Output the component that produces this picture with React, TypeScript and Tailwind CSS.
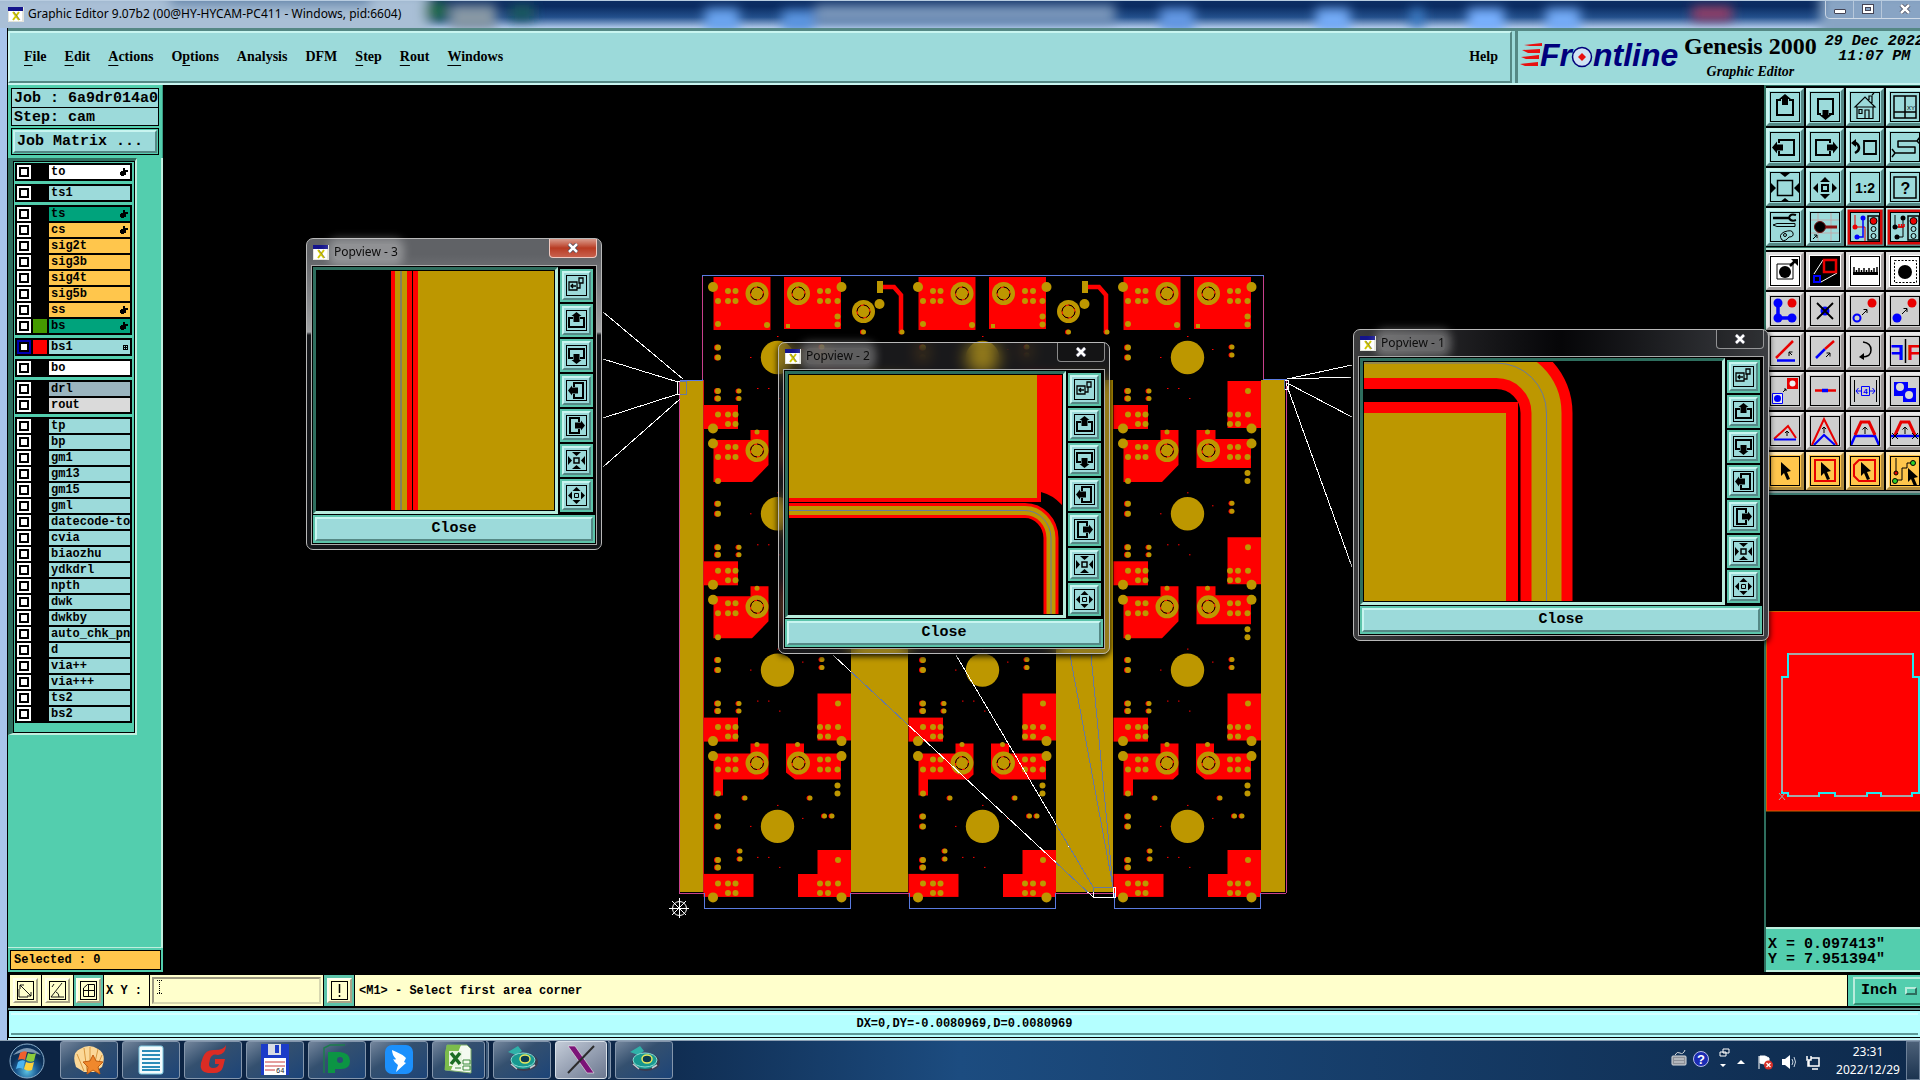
import type { ReactNode } from "react"

const bevel = "border-t-[#c8f5f0] border-l-[#c8f5f0] border-r-[#558885] border-b-[#558885]"
const mono = "font-['Liberation_Mono',monospace] font-bold"

/* ---------- layer list ---------- */

type Layer = { name: string; bg: string; hand?: boolean; swatch?: string; active?: boolean }

const sky = "bg-[#9cdada]"
const amber = "bg-[#ffc64c]"
const green = "bg-[#00a37c]"

const layerGroups: Layer[][] = [
    [{ name: "to", bg: "bg-white", hand: true }],
    [{ name: "ts1", bg: sky }],
    [
        { name: "ts", bg: green, hand: true },
        { name: "cs", bg: amber, hand: true },
        { name: "sig2t", bg: amber },
        { name: "sig3b", bg: amber },
        { name: "sig4t", bg: amber },
        { name: "sig5b", bg: amber },
        { name: "ss", bg: amber, hand: true },
        { name: "bs", bg: green, hand: true, swatch: "bg-[#459a00]" },
    ],
    [{ name: "bs1", bg: sky, swatch: "bg-[#ff0000]", active: true }],
    [{ name: "bo", bg: "bg-white" }],
    [
        { name: "drl", bg: "bg-[#9ab4be]" },
        { name: "rout", bg: "bg-[#dadada]" },
    ],
    [
        "tp", "bp", "gm1", "gm13", "gm15", "gml", "datecode-to", "cvia", "biaozhu", "ydkdrl",
        "npth", "dwk", "dwkby", "auto_chk_pnl", "d", "via++", "via+++", "ts2", "bs2",
    ].map((name) => ({ name, bg: sky })),
]

function LayerRow({ layer }: { layer: Layer }) {
    return (
        <label className="flex h-[14px] gap-[2px]">
            <span className={`flex w-[14px] items-center justify-center ${layer.active ? "bg-[#0000b0]" : "bg-white"}`}>
                <input
                    type="checkbox"
                    defaultChecked={layer.active}
                    className="size-[10px] appearance-none border-2 border-black bg-white"
                />
            </span>
            <span className={`w-[14px] ${layer.swatch ?? "bg-black"}`} />
            <span className={`flex min-w-0 flex-1 items-center overflow-hidden pl-[2px] text-xs leading-4 ${layer.bg}`}>
                <span className="min-w-0 flex-1 overflow-hidden whitespace-nowrap">{layer.name}</span>
                {layer.hand && (
                    <svg className="mr-[2px] h-[8px] w-[8px] shrink-0" viewBox="0 0 8 8">
                        <path d="M3 0h2v2h3v2H6v3H4v1H1V7H0V4h1V3h2z" fill="#000" />
                    </svg>
                )}
                {layer.active && (
                    <svg className="mr-[2px] size-[5px] shrink-0" viewBox="0 0 5 5" shapeRendering="crispEdges">
                        <path d="M.5.5h4v4h-4zM2.5 0v5M0 2.5h5" fill="none" stroke="#000" />
                    </svg>
                )}
            </span>
        </label>
    )
}

function Sidebar() {
    return (
        <aside className={`flex w-[155px] shrink-0 flex-col bg-[#53ceae] ${mono}`}>
            <div className="border-r border-[#3a9a82] p-[3px] text-[15px]">
                <div className="h-5 overflow-hidden border border-black bg-[#9cdada] pl-[2px] leading-[19px] whitespace-nowrap">Job : 6a9dr014a0</div>
                <div className="h-[18px] border border-t-0 border-black bg-[#9cdada] pl-[2px] leading-[19px]">Step: cam</div>
                <div className="mt-[2px] h-[27px] border border-black p-px">
                    <button className={`block h-full w-full border-2 bg-[#9cdada] pl-[2px] text-left leading-5 ${bevel}`}>
                        Job Matrix ...
                    </button>
                </div>
            </div>
            <div className="flex-1 border-r-2 border-b border-[#c0efdf]">
                <div className="w-[129px] border-t-[3px] border-r-2 border-b-2 border-l-[5px] border-t-[#2e6e5e] border-r-[#c0efdf] border-b-[#c0efdf] border-l-[#2e6e5e]">
                    <div className="flex flex-col gap-[3px] border border-black pt-px pr-[2px] pb-[9px] pl-px">
                        {layerGroups.map((group, i) => (
                            <div key={i} className="flex flex-col gap-[2px] bg-black p-[2px]">
                                {group.map((layer) => (
                                    <LayerRow key={layer.name} layer={layer} />
                                ))}
                            </div>
                        ))}
                    </div>
                </div>
            </div>
            <div className="p-[2px]">
                <div className="h-5 border border-black bg-[#ffc64c] pl-[3px] text-xs leading-[19px]">Selected : 0</div>
            </div>
        </aside>
    )
}

/* ---------- board drawing ---------- */

const GOLD = "#bd9700"
const RED = "#ff0000"

function Pads({ at, r = 3, loose = false }: { at: number[][]; r?: number; loose?: boolean }) {
    return (
        <>
            {at.map(([x, y], i) => (
                <g key={i}>
                    {loose && <circle cx={x - 1} cy={y} r={r} fill={RED} />}
                    <circle cx={x} cy={y} r={r} fill={GOLD} />
                </g>
            ))}
        </>
    )
}

function Ring({ x, y }: { x: number; y: number }) {
    return (
        <g>
            <circle cx={x} cy={y} r="11.5" fill={GOLD} />
            <circle cx={x} cy={y} r="6.5" fill="none" stroke={RED} strokeWidth="1" />
            <circle cx={x} cy={y} r="6.5" fill="none" stroke="#000" strokeWidth="1" strokeDasharray="7 3" />
        </g>
    )
}

function ModulePads() {
    return (
        <g>
            <Pads r={2.5} at={[[757, 432], [797.5, 432]]} />
            <Pads
                at={[
                    [728, 447], [735.5, 447], [718, 457], [728, 457], [735.5, 457],
                    [820, 447], [828, 447], [820, 457], [828, 457], [837.5, 457],
                    [718, 481], [837.5, 473], [837.5, 481],
                ]}
            />
            <Pads r={5} at={[[713, 443.5], [841.5, 443.5]]} />
            <Ring x={757} y={450.5} />
            <Ring x={798.5} y={450.5} />
        </g>
    )
}

function Module() {
    return (
        <g>
            <polygon points="713.5,440 750.5,440 750.5,430 768.5,430 768.5,465 752,482 713.5,482" fill={RED} />
            <polygon points="786.5,430 805.5,430 805.5,439 841,439 841,468 786.5,468" fill={RED} />
            <ModulePads />
        </g>
    )
}

function BottomModule() {
    return (
        <g>
            <polygon points="713.5,441 750.5,441 750.5,431 768.5,431 768.5,462 763,467 723,467 723,483 713.5,483" fill={RED} />
            <polygon points="786,431 804,431 804,441 841,441 841,467 795,467 786,460" fill={RED} />
            <ModulePads />
        </g>
    )
}

/* one repeated step between two module rows, drawn for the first row */
function Cell({ last = false, children }: { last?: boolean; children?: ReactNode }) {
    return (
        <g>
            <circle cx="777.5" cy="357.5" r="16.7" fill={GOLD} />
            <Pads loose at={[[718, 347.5], [718, 357.5], [718, 391], [718, 398.5]]} />
            {!last && <Pads loose r={2.5} at={[[739, 391], [739, 398.5], [822, 347], [822, 355]]} />}
            <path d="M750 357.500h1.500M757 388.500h1.500M802 349.500h1.500M777 336.500h1.500M768 388.500h1.500M779 398.500h1.500" stroke={RED} strokeWidth="1" />
            <rect x="703.5" y="405" width={last ? 50 : 34.5} height={last ? 23 : 24} fill={RED} />
            <path d={last ? "M817.5 381h33.5v47h-53v-23h19.500z" : "M817.5 381h33.5v47h-33.500z"} fill={RED} />
            <Pads
                at={[
                    [718, 414.5], [728, 414.5], [735.5, 414.5], [728, 424], [735.5, 424],
                    [838, 391], [820, 414.5], [828, 414.5], [838, 414.5], [820, 424], [828, 424],
                ]}
            />
            <Pads r={5} at={[[713, 428.5], [841.5, 428.5]]} />
            {last && <Pads loose r={2.5} at={[[745, 329], [810, 329], [824.5, 347], [832, 347], [740, 382], [740, 390]]} />}
            {children}
        </g>
    )
}

function BoardColumn({ x, links }: { x: number; links: boolean }) {
    return (
        <g transform={`translate(${x} 0)`}>
            <rect x="713.5" y="277" width="57" height="53" fill={RED} />
            <rect x="784" y="277" width="57" height="52" fill={RED} />
            <Ring x={757} y={293.5} />
            <Ring x={798.5} y={293.5} />
            <Pads r={5} at={[[713, 287], [841.5, 287]]} />
            <Pads
                at={[
                    [728, 291], [735.5, 291], [718, 301], [728, 301], [735.5, 301], [718, 324], [767, 325],
                    [820, 291], [828, 291], [820, 301], [828, 301], [837.5, 301], [837.5, 316.5], [837.5, 324.5],
                ]}
            />
            <rect x="786" y="324" width="4" height="4" fill={GOLD} />
            {links && (
                <g>
                    <path d="M883 287h11l7 8v37" fill="none" stroke={RED} strokeWidth="4.5" />
                    <rect x="877" y="281" width="6" height="12" fill={GOLD} />
                    <Ring x={863.5} y={311.5} />
                    <Pads r={5} at={[[879.5, 304]]} />
                    <Pads loose r={2.5} at={[[902, 332], [863.5, 332]]} />
                </g>
            )}
            <Cell><Module /></Cell>
            <g transform="translate(0 156.3)"><Cell><Module /></Cell></g>
            <g transform="translate(0 312.6)"><Cell><BottomModule /></Cell></g>
            <g transform="translate(0 468.9)"><Cell last /></g>
        </g>
    )
}

const callouts =
    "M603 312L683 379M603 359L678 382M603 418L678 394M603 467L680 399M677.5 381.5h9v12.500h-9z" +
    "M1287 379L1352 365M1287 379L1352 377M1287 383L1352 417M1286 383L1352 567M1284 380h4v9h-4z" +
    "M833 655L1093 897M956 655L1093 887M1070 655L1113 887M1091 655L1114 897M1093.5 887.5h21.500v9.500h-21.500z"

const rails = "M680 380h23v512h-23zM851 380h57v512h-57zM1056 380h57v512h-57zM1261 380h24v512h-24z"

function Board() {
    return (
        <svg className="block h-full w-full" viewBox="163 85 1601 887" preserveAspectRatio="xMinYMid slice">
            <defs>
                <clipPath id="rails">
                    <path d={rails} />
                </clipPath>
            </defs>
            <path d={rails} fill={GOLD} />
            <BoardColumn x={0} links />
            <BoardColumn x={205} links />
            <BoardColumn x={410} links={false} />
            <g fill="none" strokeWidth="1" shapeRendering="crispEdges">
                <path d="M702.5 379.5V275.5h561v104M679.5 380.5h23M1263.5 379.5h23M704.5 893v15.5h146V893M909.5 893v15.500h146V893M1114.5 893v15.5h146V893" stroke="#5b7be0" />
                <path d="M702.5 379V277M1263.5 379V277M679.5 893V381M1286.5 380v513M679 893.5h25M851 893.5h58M1056 893.5h58M1261 893.5h25" stroke="#c8408c" />
                <path d="M703.5 380v512" stroke="#d01818" />
                <path d={callouts} stroke="#fff" />
                <path d={callouts} stroke="#68799c" clipPath="url(#rails)" />
                <path d="M679.5 898v20M669 908.5h20" stroke="#fff" />
            </g>
            <g fill="none" stroke="#fff">
                <path d="M672 901l14 14M686 901l-14 14" />
                <circle cx="679.5" cy="908.5" r="7" />
            </g>
        </svg>
    )
}

/* ---------- pop view windows ---------- */

function XIcon() {
    return (
        <svg className="h-[15px] w-4 shrink-0" viewBox="0 0 16 15">
            <rect width="16" height="15" fill="#e4e4dc" />
            <rect width="15" height="4" fill="#14148c" />
            <rect x="1" y="4" width="13" height="10" fill="#fff" />
            <path d="M5 5l6 8M11 5l-6 8" stroke="#d2c800" strokeWidth="2" />
            <path d="M6 5l6 8" stroke="#555" strokeWidth=".6" />
        </svg>
    )
}

const popIcons: { label: string; art: ReactNode }[] = [
    { label: "Link view", art: <path d="M3 7h8v8H3zM13 3h4v5h-4zM11 13h3V8M5 11h5M7 9l-2 2 2 2" fill="none" stroke="#000" strokeWidth="1.3" /> },
    { label: "Pan up", art: <><path d="M7 8H3v9h15V8h-4" fill="none" stroke="#000" strokeWidth="2" /><path d="M10.5 2l5 4h-2v6h-6V6h-2z" /></> },
    { label: "Pan down", art: <><path d="M7 13H3V4h15v9h-4" fill="none" stroke="#000" strokeWidth="2" /><path d="M10.5 19l5-4h-2V9h-6v6h-2z" /></> },
    { label: "Pan left", art: <><path d="M8 7V3h9v15H8v-4" fill="none" stroke="#000" strokeWidth="2" /><path d="M2 10.5l4-5v2h6v6H6v2z" /></> },
    { label: "Pan right", art: <><path d="M13 7V3H4v15h9v-4" fill="none" stroke="#000" strokeWidth="2" /><path d="M19 10.5l-4-5v2H9v6h6v2z" /></> },
    { label: "Zoom in", art: <><path d="M8 8h5v5H8z" fill="none" stroke="#000" strokeWidth="1.5" /><path d="M6 2h9l-4.500 4zM6 19h9l-4.500-4zM2 6v9l4-4.500zM19 6v9l-4-4.500z" /></> },
    { label: "Zoom out", art: <><path d="M8.5 8.5h4v4h-4z" fill="none" stroke="#000" strokeWidth="1" /><path d="M6.5 6h8l-4-4zM6.5 15h8l-4 4zM6 6.5v8l-4-4zM15 6.5v8l4-4z" /></> },
]

function Popview({ title, place, frame, red, children }: { title: string; place: string; frame: string; red?: boolean; children: ReactNode }) {
    return (
        <section className={`absolute flex flex-col rounded-[7px] border border-[#b8b8b8] px-1 pb-1 shadow-[0_2px_6px_#000] backdrop-blur-sm ${place} ${frame}`}>
            <header className="flex h-[26px] items-start justify-between pl-[2px] font-['Noto_Sans',sans-serif]">
                <div className="flex items-center gap-[5px] pt-[5px]">
                    <XIcon />
                    <h2 className="rounded bg-white/30 text-xs leading-4 text-[#0c0c0c] shadow-[0_0_8px_6px_rgba(255,255,255,0.3)]">{title}</h2>
                </div>
                <button
                    aria-label={`Close ${title}`}
                    className={`flex h-[19px] w-12 items-center justify-center rounded-b-[4px] border border-t-0 pb-px ${
                        red ? "border-[#f0c8c0] bg-linear-to-b from-[#d99a8c] via-[#b83a22] to-[#c8604c]" : "border-white/50 bg-black/20"
                    }`}
                >
                    <svg className="h-[10px] w-[12px]" viewBox="0 0 12 10">
                        <path d="M2 1l8 8M10 1L2 9" stroke="#445" strokeWidth="4" />
                        <path d="M2 1l8 8M10 1L2 9" stroke="#fff" strokeWidth="2.5" />
                    </svg>
                </button>
            </header>
            <div className="flex flex-1 flex-col border border-[#aaa] bg-black p-px">
                <div className="flex flex-1 gap-[2px]">
                    <div className="min-w-0 flex-1 border-[3px] border-t-[#2e6e5e] border-r-[#b8ecdc] border-b-[#b8ecdc] border-l-[#2e6e5e] bg-black p-px">{children}</div>
                    <div className="flex flex-col gap-[2px] pt-[2px] pr-[2px]">
                        {popIcons.map((icon) => (
                            <button key={icon.label} aria-label={icon.label} className="size-[33px] border-2 border-[#5cc4aa]">
                                <span className={`block size-[29px] border-2 bg-[#9cdada] p-[2px] ${bevel}`}>
                                    <svg className="size-[21px]" viewBox="0 0 21 21">
                                        <rect x=".5" y=".5" width="20" height="20" fill="none" stroke="#000" />
                                        {icon.art}
                                    </svg>
                                </span>
                            </button>
                        ))}
                    </div>
                </div>
                <div className="mt-px border-2 border-[#5cc4aa]">
                    <button className={`block h-6 w-full border-2 bg-[#9cdada] text-[15px] leading-5 ${mono} ${bevel}`}>Close</button>
                </div>
            </div>
        </section>
    )
}

function Popviews() {
    return (
        <>
            <Popview
                title="Popview - 3"
                red
                place="top-[153px] left-[298px] h-[312px] w-[296px]"
                frame="bg-linear-to-b from-[#606266] from-5% via-[#a0a2a4] via-30% to-[#14161a] to-31%"
            >
                <svg className="block h-full w-full" viewBox="0 0 238 239" preserveAspectRatio="xMinYMin slice">
                    <rect x="74" width="4" height="239" fill={RED} />
                    <rect x="78" width="12" height="239" fill={GOLD} />
                    <rect x="83" width="2" height="239" fill="#84805c" />
                    <rect x="90" width="11" height="239" fill={RED} />
                    <rect x="95" width="1" height="239" fill="#000" />
                    <rect x="101" width="137" height="239" fill={GOLD} />
                </svg>
            </Popview>
            <Popview title="Popview - 2" place="top-[257px] left-[770px] h-[312px] w-[332px]" frame="bg-[#48484c]/35">
                <svg className="block h-full w-full" viewBox="0 0 273 239" preserveAspectRatio="xMinYMin slice">
                    <path d="M0 123h252v-6q12 3 21 13V0h-25v123z" fill={RED} />
                    <path d="M0 123h252v4H0z" fill={RED} />
                    <rect width="248" height="123" fill={GOLD} />
                    <g fill="none">
                        <path d="M-9 135.500H236A26 28 0 0 1 262 163V250" stroke={RED} strokeWidth="15" />
                        <path d="M-9 135.500H236A26 28 0 0 1 262 163V250" stroke={GOLD} strokeWidth="9" />
                        <path d="M-9 135.500H236A26 28 0 0 1 262 163V250" stroke="#68799c" strokeWidth="1" />
                    </g>
                </svg>
            </Popview>
            <Popview
                title="Popview - 1"
                place="top-[244px] right-[151px] h-[312px] w-[416px]"
                frame="bg-linear-to-r from-[#3c3c3e] via-[#060608] via-50% to-[#3c3e42]"
            >
                <svg className="block h-full w-full" viewBox="0 0 358 239" preserveAspectRatio="xMinYMin slice">
                    <g fill="none">
                        <path d="M-30 1H132A50 50 0 0 1 182.5 51V270" stroke={RED} strokeWidth="52" />
                        <path d="M-30 1H132A50 50 0 0 1 182.5 51V270" stroke={GOLD} strokeWidth="30" />
                        <path d="M-30 1H132A50 50 0 0 1 182.5 51V270" stroke="#68799c" strokeWidth="1" />
                    </g>
                    <path d="M0 40h154v199H0z" fill={RED} />
                    <path d="M0 51h142v188H0z" fill={GOLD} />
                    <path d="M154 47h2v192h-2z" />
                </svg>
            </Popview>
        </>
    )
}

/* ---------- tool palette ---------- */

const line = { fill: "none", stroke: "#000" }
const BLUE = "#0000ff"
const CRIMSON = "#e80000"

function Traffic({ red }: { red: boolean }) {
    return (
        <>
            <rect x="-1" y="-1" width="32" height="32" fill="none" stroke="#d80808" strokeWidth="3" />
            <rect x="18" y="4" width="11" height="24" {...line} strokeWidth="1.5" />
            <circle cx="23.5" cy="9" r="3.5" fill="#e80000" stroke="#000" />
            <circle cx="23.5" cy="17" r="2.5" {...line} />
            <circle cx="23.5" cy="24" r="2.5" {...line} />
            {red ? (
                <>
                    <path d="M5 3v12h10v14" fill="none" stroke={CRIMSON} />
                    <path d="M13 7v18H8" fill="none" stroke={BLUE} strokeWidth="1.5" />
                    <circle cx="13" cy="6" r="2.5" fill={BLUE} />
                    <circle cx="7" cy="25" r="2.5" fill={BLUE} />
                    <circle cx="5" cy="15" r="2.5" fill={CRIMSON} />
                </>
            ) : (
                <>
                    <path d="M5 3v12h8M13 7v18H8" {...line} />
                    <path d="M8 15h6M9 12v3M11.5 12v3M14 12v3" stroke={CRIMSON} strokeWidth="1.5" />
                    <circle cx="13" cy="6" r="2.5" />
                    <circle cx="7" cy="25" r="2.5" />
                    <circle cx="5" cy="15" r="2.5" />
                </>
            )}
        </>
    )
}

const viewTools: [string, ReactNode][] = [
    ["Pan up", <><path d="M11 8H7v15h16V8h-4" {...line} strokeWidth="2" /><path d="M15 2l6 5h-3v6h-6V7H9z" /></>],
    ["Pan down", <><path d="M11 22H8V7h15v15h-4" {...line} strokeWidth="2" /><path d="M15.5 28l6-5h-3v-5h-6v5h-3z" /></>],
    ["Home", <path d="M7 14.5v12h16v-12M5 15l10-10 10 10zM19 8V4h3v7M22 3l2-2M9 17.5h3v4H9zM15 26v-8h4v8" {...line} strokeWidth="1.2" />],
    ["Window XY", <><path d="M4 4h22v22H4zM15 4v22M4 20h22" {...line} strokeWidth="1.5" /><text x="17" y="18" fontSize="6" fontFamily="Liberation Sans">XY</text></>],
    ["Pan left", <><path d="M9 11V8h15v15H9v-4" {...line} strokeWidth="2" /><path d="M2 15.5l5-6v3h6v6H7v3z" /></>],
    ["Pan right", <><path d="M20 11V8H6v15h14v-4" {...line} strokeWidth="2" /><path d="M28 15.5l-5-6v3h-6v6h6v3z" /></>],
    ["Previous view", <><path d="M14 9h12v13H14z" {...line} strokeWidth="1.8" /><path d="M3 11h3q3 2 3 5t-4 5" {...line} strokeWidth="2.5" /><path d="M1 11l5-4v8z" /></>],
    ["Serpentine", <path d="M27 9H8v6h17v6H5M30 5l-3 4 3 3M2 17l3 4-3 4" {...line} strokeWidth="1.5" strokeLinejoin="round" />],
    ["Zoom in", <><path d="M7.5 8.5h15v15h-15z" {...line} strokeWidth="1.5" /><path d="M10 1h10l-5 4zM10 30h10l-5-4zM1 11v10l5-5zM29 11v10l-5-5z" /></>],
    ["Zoom out", <><path d="M12 13h6v6h-6z" {...line} strokeWidth="2" /><path d="M10 10h10l-5-5zM10 22h10l-5 5zM8 11v10l-5-5zM22 11v10l5-5z" /></>],
    ["Scale", <text x="15" y="21" textAnchor="middle" fontSize="14" fontFamily="Liberation Sans" fontWeight="bold">1:2</text>],
    ["Help", <><path d="M4 5h22v21H4z" {...line} strokeWidth="1.5" /><text x="15.5" y="22" textAnchor="middle" fontSize="16" fontFamily="Liberation Sans" fontWeight="bold">?</text></>],
    ["Settings", <><path d="M3 6h16" {...line} strokeWidth="2.5" /><path d="M26 3q-6-2-7 3 2 4 7 2" {...line} strokeWidth="2" /><path d="M3 13l4-1.500h18v3H7zM12 28q-4-5 2-8 8-3 9 1 1 4-4 4-4 5-7 3z" {...line} /><circle cx="15" cy="23" r="1.5" {...line} /></>],
    ["Highlight", <><path d="M0 8h30M0 21h30M8 0v30M21 0v30" stroke="#c99" strokeWidth=".7" /><path d="M12 15h15" stroke="#8a1212" strokeWidth="3" /><circle cx="10" cy="15" r="5.5" stroke="#701010" /><path d="M3 27l4-4M4 23h3v3" {...line} /></>],
    ["Net points", <Traffic red />],
    ["Net compare", <Traffic red={false} />],
]

const gray = "bg-[#cecece] border-t-[#e8e8e8] border-l-[#e8e8e8] border-r-[#9c9898] border-b-[#9c9898]"
const white = "bg-white border-t-[#e0e0e0] border-l-[#e0e0e0] border-r-[#a8a4a4] border-b-[#a8a4a4]"
const orange = "bg-[#ffc64c] border-t-[#ffe7b0] border-l-[#ffe7b0] border-r-[#b08a3c] border-b-[#b08a3c]"

const pointer = <path d="M11 6l10 9-4 1 3 7-3 1-3-7-3 3z" />

const editTools: [string, string, ReactNode][] = [
    ["Move feature", white, <><path d="M7 8h16v15H7z" {...line} /><circle cx="15" cy="16" r="6" /><path d="M20 10l5-5" stroke="#000" strokeWidth="2.5" /><path d="M21 3h7v7z" /></>],
    ["Pop view", white, <><path d="M0 0h30v30H0z" /><path d="M4 18L13 4M11 26l16-9" stroke="#fff" /><path d="M14 4h12v12H14z" fill="none" stroke={CRIMSON} strokeWidth="2.5" /><path d="M4 20h6v6H4z" fill="none" stroke={BLUE} strokeWidth="2" /></>],
    ["Measure", white, <><path d="M3 16h25v3H3z" /><path d="M4 11v6M6.5 14v3M9 12v5M11.5 14v3M14 12v5M16.5 14v3M19 12v5M21.5 14v3M24 12v5M27 11v6" {...line} strokeWidth="1.5" /></>],
    ["Select by area", white, <><path d="M4.5 4.5h22v22h-22z" {...line} strokeDasharray="2 1.5" /><circle cx="15" cy="16" r="7" /></>],
    ["Select net", gray, <><path d="M8 7v15h14" fill="none" stroke={BLUE} strokeWidth="3.5" /><g fill={BLUE}><circle cx="8" cy="7" r="4.5" /><circle cx="8" cy="22" r="4.5" /><circle cx="22" cy="22" r="4.5" /></g><circle cx="22" cy="7" r="4.5" fill={CRIMSON} /></>],
    ["Delete", gray, <><circle cx="15" cy="15" r="4.5" fill={BLUE} /><path d="M7 7l16 16M23 7L7 23" {...line} strokeWidth="1.8" /></>],
    ["Copy", gray, <><circle cx="22" cy="7" r="4.5" fill={CRIMSON} /><circle cx="7" cy="22" r="3.5" fill="none" stroke={BLUE} strokeWidth="2" /><path d="M12 19l5-5M13.5 13.5H17V17" {...line} /></>],
    ["Move", gray, <><circle cx="22" cy="7" r="4.5" fill={CRIMSON} /><circle cx="7" cy="22" r="4.5" fill={BLUE} /><path d="M12 18l5-5M13.5 12.5H17V16" {...line} /></>],
    ["Rotate line", gray, <><path d="M6 22L23 5" stroke={CRIMSON} strokeWidth="2.5" /><path d="M7 24.5h18" stroke={BLUE} strokeWidth="2.5" /><path d="M22 19l-3-3M19 20v-4h3.500" {...line} /></>],
    ["Stretch line", gray, <><path d="M6 22l9-9" stroke={BLUE} strokeWidth="2.5" /><path d="M15 13l9-8" stroke={CRIMSON} strokeWidth="2.5" /><path d="M16 21l4-4M16.5 17H20v3.500" {...line} /></>],
    ["Rotate", gray, <><path d="M13 6q8 1 8 8t-9 7" {...line} strokeWidth="1.5" /><path d="M9 21l5-4v7z" /></>],
    ["Mirror", gray, <><path d="M15.5 3v24" {...line} strokeWidth="1.5" /><text x="17" y="24" fontSize="22" fontFamily="Liberation Sans" fontWeight="bold" fill={CRIMSON}>F</text><g transform="scale(-1 1)"><text x="-14" y="24" fontSize="22" fontFamily="Liberation Sans" fontWeight="bold" fill={BLUE}>F</text></g></>],
    ["Substitute", gray, <><path d="M17 2h11v11H17z" fill={CRIMSON} /><circle cx="22.5" cy="7.5" r="3" fill="#eee" /><path d="M2.5 17.5h10v10h-10z" fill="#eee" stroke={BLUE} /><circle cx="7.5" cy="22.5" r="3.5" fill={BLUE} /><path d="M13 16l3-3M14 13h2v2" {...line} /></>],
    ["Join", gray, <><path d="M5 14.5h21" stroke={CRIMSON} strokeWidth="2.5" /><path d="M12 14.5h6" stroke={BLUE} strokeWidth="3.5" /></>],
    ["Spacing", gray, <><path d="M4.5 4v22M26.5 4v22" {...line} /><path d="M6 15h19M8.5 12L6 15l2.500 3M22.5 12l2.500 3-2.500 3" fill="none" stroke={BLUE} /><path d="M11.5 10.5h8v9h-8z" fill="#cecece" stroke={BLUE} /><text x="15.5" y="18" textAnchor="middle" fontSize="8" fontFamily="Liberation Sans" fontWeight="bold" fill={BLUE}>4</text></>],
    ["Surface", gray, <><path d="M4 6h14v14H4zM13 12h13v14H13z" fill={BLUE} /><circle cx="10" cy="11" r="4" fill="#d8d8d8" /><circle cx="19" cy="19" r="4" fill="#d8d8d8" /></>],
    ["Triangle", gray, <><path d="M4 23l14-13 8 12" fill="none" stroke={CRIMSON} strokeWidth="2" /><path d="M4 23.5h22" stroke={BLUE} strokeWidth="2" /><path d="M17 20v-5M15 17l2-2 2 2" {...line} /></>],
    ["Chevron", gray, <><path d="M2 29L14 3l13 26" fill="none" stroke={CRIMSON} strokeWidth="2" /><path d="M4 29l10-10 11 10" fill="none" stroke={BLUE} strokeWidth="2" /><path d="M14 17v-6M12 13l2-2 2 2" {...line} /></>],
    ["Trapezoid", gray, <><path d="M1 29l4-9h20l4 9" fill="none" stroke={BLUE} strokeWidth="2.5" /><path d="M5 19l6-13h8l6 13" fill="none" stroke={CRIMSON} strokeWidth="3" /><path d="M15 18v-7M12.5 13.5L15 11l2.500 2.500" {...line} /></>],
    ["Trapezoid cut", gray, <><path d="M1 20h28" stroke={BLUE} strokeWidth="2.5" /><path d="M5 19l6-13h8l6 13" fill="none" stroke={CRIMSON} strokeWidth="3" /><path d="M15 18v-7M12.5 13.5L15 11l2.500 2.500M2 17l6 6M8 17l-6 6M22 17l6 6M28 17l-6 6" {...line} /></>],
    ["Select", orange, pointer],
    ["Select in frame", orange, <><path d="M5 4h20v21H5z" fill="none" stroke={CRIMSON} strokeWidth="2" />{pointer}</>],
    ["Select in polygon", orange, <><path d="M9 4h16v21H9l-5-5V9z" fill="none" stroke={CRIMSON} strokeWidth="2" />{pointer}</>],
    ["Select by net", orange, <><path d="M6 2v15M6 24h6V12h5V7h6" {...line} /><circle cx="6" cy="17" r="2" fill="#d00" stroke="#000" /><circle cx="5" cy="25" r="2.5" fill="#2ad02a" stroke="#000" /><circle cx="23" cy="7" r="2.5" fill="#2ad02a" stroke="#000" /><g transform="translate(7 6)">{pointer}</g></>],
]

function ToolButton({ label, tone, children }: { label: string; tone: string; children: ReactNode }) {
    return (
        <button aria-label={label} className={`size-[38px] border-[3px] p-px ${tone}`}>
            <svg className="block size-[30px] overflow-visible" viewBox="0 0 30 30">
                {children}
                <rect x=".5" y=".5" width="29" height="29" fill="none" stroke="#000" />
            </svg>
        </button>
    )
}

function Palette() {
    return (
        <aside className="flex w-[156px] shrink-0 flex-col overflow-hidden border-l-2 border-[#2e6e5e] bg-black">
            <div className="grid w-max grid-cols-4 gap-[2px] border-t border-[#2e6e5e] pt-[2px]">
                {viewTools.map(([label, art]) => (
                    <ToolButton key={label} label={label} tone={`bg-[#9cdada] ${bevel}`}>{art}</ToolButton>
                ))}
            </div>
            <div className="mt-px h-[3px] border-t border-[#2e6e5e] bg-[#b8ecdc]" />
            <div className="mt-[2px] grid w-max grid-cols-4 gap-[2px]">
                {editTools.map(([label, tone, art]) => (
                    <ToolButton key={label} label={label} tone={tone}>{art}</ToolButton>
                ))}
            </div>
            <div className="mt-px h-1 border-t-2 border-[#8a9a98] bg-[#3c7a70]" />
            <div className="flex flex-1 flex-col justify-center">
                <svg className="block h-[201px] w-[160px]" viewBox="1766 611 160 201">
                    <rect x="1766.5" y="611.5" width="170" height="199.5" fill={RED} stroke="#c86400" />
                    <path d="M1788 654h125v23h6v116h-7v3h-31v-3h-14v3h-32v-3h-16v3h-31v-3h-6V677h6z" fill="none" stroke="#22e8f0" strokeWidth="2" />
                    <path d="M1789 654h123M1782 679v112M1789 796h29M1836 796h30M1882 796h29" stroke="#a8a8a8" strokeWidth="2" />
                    <path d="M1779 793l6 7M1785 793l-6 7" stroke="#a8a8a8" />
                </svg>
            </div>
            <div className={`h-[45px] border-t-2 border-b-2 border-[#c0efdf] bg-[#53ceae] pt-2 pl-[2px] text-[15px] leading-[15px] whitespace-pre ${mono}`}>
                <p>X = 0.097413"</p>
                <p>Y = 7.951394"</p>
            </div>
        </aside>
    )
}

/* ---------- top bars ---------- */

function TitleBar() {
    return (
        <header className="relative flex h-7 items-start justify-between overflow-hidden border-t border-[#b8cce0] bg-linear-to-b from-[#0b2c62] from-20% via-[#23508c] via-60% to-[#b4ccec]">
            <svg className="absolute inset-0 h-full w-full" viewBox="0 0 1920 28" preserveAspectRatio="none">
                <defs>
                    <filter id="haze" x="-20%" y="-200%" width="140%" height="500%"><feGaussianBlur stdDeviation="6" /></filter>
                </defs>
                <g filter="url(#haze)">
                    <rect x="-20" y="-10" width="450" height="50" fill="#a9bfd6" />
                    <rect x="170" y="-10" width="200" height="16" fill="#6a8cb0" />
                    <rect x="425" width="22" height="20" fill="#1c6a4c" />
                    <rect x="450" y="4" width="46" height="26" fill="#8898a4" />
                    <rect x="510" y="4" width="24" height="16" fill="#1c5a5c" />
                    <rect x="705" y="8" width="34" height="24" fill="#6aa4f0" />
                    <rect x="782" y="10" width="32" height="22" fill="#5a94e0" />
                    <rect x="815" y="4" width="300" height="20" fill="#7c98bc" />
                    <rect x="1160" y="8" width="34" height="24" fill="#6498e4" />
                    <rect x="1316" y="8" width="34" height="24" fill="#74acf8" />
                    <rect x="1410" y="8" width="14" height="20" fill="#3c7cc4" />
                    <rect x="1468" y="8" width="36" height="24" fill="#78b0ff" />
                    <rect x="1546" y="8" width="34" height="24" fill="#74acf8" />
                    <rect x="1692" y="6" width="40" height="14" fill="#a03c64" />
                    <rect x="1820" y="-10" width="120" height="50" fill="#88a4c4" />
                </g>
            </svg>
            <div className="relative flex items-center gap-1 pt-[5px] pl-2">
                <XIcon />
                <h1 className="font-['Noto_Sans',sans-serif] text-xs leading-4">Graphic Editor 9.07b2 (00@HY-HYCAM-PC411 - Windows, pid:6604)</h1>
            </div>
            <div className="relative flex h-[18px] rounded-bl-[5px] border-b border-l border-white/60">
                <button aria-label="Minimize" className="flex w-7 items-end justify-center border-r border-white/40 pb-1">
                    <span className="h-[5px] w-3 rounded-[1px] border border-[#445] bg-white" />
                </button>
                <button aria-label="Maximize" className="flex w-7 items-center justify-center border-r border-white/40 pb-px">
                    <svg className="h-[10px] w-3" viewBox="0 0 12 10"><path d="M2 2h8v6H2z" fill="none" stroke="#445" strokeWidth="4" /><path d="M2 2h8v6H2z" fill="none" stroke="#fff" strokeWidth="2" /></svg>
                </button>
                <button aria-label="Close" className="flex w-[38px] items-center justify-center pb-px pl-2">
                    <svg className="h-[10px] w-3" viewBox="0 0 12 10"><path d="M2 1l8 8M10 1L2 9" stroke="#445" strokeWidth="4" /><path d="M2 1l8 8M10 1L2 9" stroke="#fff" strokeWidth="2.5" /></svg>
                </button>
            </div>
        </header>
    )
}

const menus: [string, string, string][] = [
    ["", "F", "ile"], ["", "E", "dit"], ["", "A", "ctions"], ["O", "p", "tions"], ["Analysis", "", ""],
    ["DFM", "", ""], ["", "S", "tep"], ["", "R", "out"], ["", "W", "indows"],
]

function FrontlineLogo() {
    return (
        <svg className="h-[34px] w-[162px] shrink-0 overflow-visible" viewBox="0 -2 162 34" aria-label="Frontline">
            <path d="M4 5L22 3v3H10zM2 10l18-1v4H8zM1 17l18-2v4H6zM0 24l18-2v4H5z" fill="#e81010" />
            <g fill="#00007c" fontFamily="Liberation Sans" fontSize="32" fontWeight="bold" fontStyle="italic">
                <text x="20" y="26">Fr</text>
                <text x="73" y="26">ntline</text>
            </g>
            <circle cx="62" cy="17" r="9.5" fill="#cfe4f4" stroke="#00007c" strokeWidth="1.5" />
            <path d="M62 13l4 4-4 4-4-4z" fill="#e81010" />
        </svg>
    )
}

function MenuBar() {
    return (
        <div className="flex h-[57px] border-t-[3px] border-b-2 border-t-[#558885] border-b-[#c8f5f0] bg-[#9cdada] font-['Liberation_Serif',serif] font-bold">
            <nav className={`mr-[3px] flex min-w-0 flex-1 items-center justify-between border-2 pr-3 pl-[14px] text-sm ${bevel}`}>
                <div className="flex gap-[18px]">
                    {menus.map(([a, b, c]) => (
                        <button key={a + b + c}>
                            {a}
                            <span className="underline underline-offset-4">{b}</span>
                            {c}
                        </button>
                    ))}
                </div>
                <button>Help</button>
            </nav>
            <div className="flex w-[405px] shrink-0 overflow-hidden border-l-[3px] border-[#558885] pl-[2px]">
                <div className="flex items-center pb-1">
                    <FrontlineLogo />
                </div>
                <div className="pt-px pl-[2px] text-center whitespace-nowrap">
                    <p className="text-2xl leading-7">Genesis 2000</p>
                    <p className="pt-[2px] text-sm leading-5 italic">Graphic Editor</p>
                </div>
                <div className="pt-[3px] pl-2 text-center font-['Liberation_Mono',monospace] text-[15px] leading-[15px] whitespace-nowrap italic">
                    <p>29 Dec 2022</p>
                    <p>11:07 PM</p>
                </div>
            </div>
        </div>
    )
}

/* ---------- bottom bars ---------- */

function CommandButton({ label, wrap, children }: { label: string; wrap: string; children: ReactNode }) {
    return (
        <div className={`flex items-center justify-center ${wrap}`}>
            <button aria-label={label} className="size-[25px] border-2 border-t-[#fffff0] border-r-[#a8a488] border-b-[#a8a488] border-l-[#fffff0] bg-[#ffffcc] p-px">
                <svg className="size-[19px]" viewBox="0 0 19 19" fill="none" stroke="#000">
                    <rect x="1.5" y=".5" width="16" height="18" />
                    {children}
                </svg>
            </button>
        </div>
    )
}

function CommandBar() {
    return (
        <div className={`flex h-9 gap-px bg-black pt-[3px] pb-[2px] pl-[2px] text-xs ${mono}`}>
            <CommandButton label="Snap" wrap="w-[31px] bg-[#ffffcc]"><path d="M4 4l11 11M4 8V4h4M11 15h4v-4M3 8v8h9" strokeWidth=".9" /></CommandButton>
            <CommandButton label="Angle" wrap="w-[31px] bg-[#ffffcc]"><path d="M3 16L14 2M3 16h13M4 6l2-3M8 11q3 1 3 5" strokeWidth=".9" /></CommandButton>
            <CommandButton label="Grid" wrap="w-[29px] bg-[#5cc4aa]"><path d="M4.5 15.5V7l4-3.500h7v12zM9.5 3.5v12M4.5 9.5h11" /></CommandButton>
            <label htmlFor="xy" className="w-[45px] bg-[#ffffcc] pl-[2px] leading-[33px] whitespace-pre">X Y :</label>
            <div className="relative w-[173px] bg-[#ffffcc] p-[2px]">
                <input id="xy" className="block h-[27px] w-full border-2 border-t-[#9c9880] border-r-[#d8d8b0] border-b-[#d8d8b0] border-l-[#9c9880] bg-[#ffffcc] px-2 outline-none" />
                <svg className="absolute top-[5px] left-[7px] h-[14px] w-[5px]" viewBox="0 0 5 14"><path d="M0 .5h5M2.5 0v14M0 13.5h5" stroke="#000" strokeDasharray="1 1" /></svg>
            </div>
            <CommandButton label="Messages" wrap="w-[30px] bg-[#5cc4aa]"><path d="M9.5 3v9M9.5 14v2" strokeWidth="1.5" /></CommandButton>
            <p className="flex-1 bg-[#ffffcc] pl-1 leading-[33px]">&lt;M1&gt; - Select first area corner</p>
            <div className="flex w-[72px] items-center overflow-hidden bg-[#53ceae] pl-[5px]">
                <div className="flex h-7 w-20 shrink-0 items-center border-2 border-t-[#b8ecdc] border-r-[#2e8a70] border-b-[#2e8a70] border-l-[#b8ecdc] pl-[6px]">
                    <select aria-label="Units" className="w-11 appearance-none text-[15px]">
                        <option>Inch</option>
                    </select>
                    <span className="h-2 w-3 border-2 border-t-[#b8ecdc] border-r-[#2e6e5e] border-b-[#2e6e5e] border-l-[#b8ecdc]" />
                </div>
            </div>
        </div>
    )
}

function StatusLine() {
    return (
        <div className="h-8 border-t-2 border-[#5c8886] bg-[#c8f8f8]">
            <div className="h-[28px] border border-r-0 border-black bg-[#b4ffff] p-[2px]">
                <p className={`h-[22px] border-t-2 border-b-2 border-t-[#d4ffff] border-b-[#5c9896] text-center text-xs leading-[18px] ${mono}`}>
                    DX=0,DY=-0.0080969,D=0.0080969
                </p>
            </div>
        </div>
    )
}

const reel = (
    <>
        <path d="M2 8l10-6 4 5-6 4z" fill="#30b0a8" />
        <ellipse cx="18" cy="18" rx="14" ry="9" fill="#3c3c50" />
        <ellipse cx="17" cy="17" rx="12" ry="8" fill="#189890" />
        <ellipse cx="17" cy="16" rx="12" ry="7" fill="none" stroke="#8cdcd4" />
        <ellipse cx="19" cy="15" rx="5" ry="4" fill="#0c3c50" stroke="#e8e85c" strokeWidth="1.5" />
        <path d="M5 20l6 5M24 24l5-3" stroke="#c8c8d0" strokeWidth="1.5" />
    </>
)

const tasks: { label: string; width: string; art: ReactNode; stacked?: boolean; active?: boolean }[] = [
    { label: "Shell", width: "w-[58px]", art: <><path d="M3 23Q-2 9 7 5q9-6 18 0 9 5 4 18l-8 5H11z" fill="#fbd898" /><path d="M11 27L4 10M14 27L11 4M17 27V3M20 27l5-22M23 25l6-14" stroke="#d89840" /><path d="M20 11l3 6 7 1-5 5 2 7-7-4-6 4 1-7-5-5 7-1z" fill="#f0882c" stroke="#c05c10" /></> },
    { label: "Documents", width: "w-[58px]", art: <><rect x="4" y="2" width="24" height="28" rx="2" fill="#f4fbfd" stroke="#7cc8e0" /><path d="M7 7h18M7 11h18M7 15h18M7 19h18M7 23h18M7 26h18" stroke="#2c8cb8" strokeWidth="1.8" /></> },
    { label: "G", width: "w-[58px]", art: <path d="M29 1q0 9-8 10-6-2-8 4l-1 5q0 4 4 4 5 0 6-4h-4v-5h10l-2 8q-2 6-9 6h-6q-9-1-7-10l2-6q3-8 12-7 9 0 11-5z" fill="#dc2c24" /> },
    { label: "Floppy", width: "w-[58px]", art: <><path d="M2 0h28v31H2z" fill="#1c3cc8" /><path d="M9 0h13v11H9z" fill="#d8dce4" /><path d="M16 1h4v8h-4z" fill="#1c3cc8" /><path d="M5 14h22v17H5z" fill="#fff" /><path d="M6 18h20M6 22h20M6 26h10" stroke="#c83c3c" /><text x="17" y="29" fontSize="7" fontFamily="Liberation Mono" fill="#222">64</text></> },
    { label: "PDF", width: "w-[58px]", art: <><path d="M3 29V4l6-3h15" fill="none" stroke="#1c7c4c" strokeWidth="1.5" /><path d="M7 29V8h12q10 1 10 9t-9 8h-6v4z" fill="#0c9444" /><circle cx="19" cy="16" r="3" fill="#2c4c74" /></> },
    { label: "DingTalk", width: "w-[58px]", art: <><rect x="2" y="1" width="28" height="29" rx="7" fill="#1c90fc" /><path d="M9 6q12 5 14 8l-2 4 2 1-10 9 2-7q-4-3-5-6 2 1 3 0-4-4-4-9z" fill="#fff" /></> },
    { label: "Excel", width: "w-[53px]", stacked: true, art: <><path d="M4 1h20l4 4v24l-26-3z" fill="#f4faf0" stroke="#7cac6c" /><path d="M4 1h14L8 26H2V8z" fill="#7cbc4c" /><path d="M6 7h13v15H6z" fill="#e8f4e0" /><path d="M8 9l9 11M17 9L8 20" stroke="#1c6c24" strokeWidth="3.5" /><path d="M20 16h7v4h-7zM20 22h7v4h-7zM12 24h6" fill="none" stroke="#3c8c3c" /></> },
    { label: "Genesis", width: "w-[58px]", art: reel },
    { label: "Xmanager", width: "w-[52px]", stacked: true, active: true, art: <><path d="M3 2h7l19 27h-7z" fill="#7c1478" stroke="#eee" strokeWidth=".6" /><path d="M29 2L3 29" stroke="#2c2c2c" strokeWidth="2" /></> },
    { label: "Genesis job", width: "w-[58px]", art: reel },
]

function Taskbar() {
    return (
        <footer className="flex h-10 items-stretch border-t border-[#8ca0b4] bg-linear-to-r from-[#0c2444] from-30% via-[#1c4c80] via-50% to-[#0e2a4c] font-['Noto_Sans',sans-serif] text-xs text-white">
            <button aria-label="Start" className="flex w-14 items-center pl-[9px]">
                <svg className="size-[36px]" viewBox="0 0 36 36">
                    <defs>
                        <radialGradient id="orb" cy=".8"><stop offset="0" stopColor="#5cc4e4" /><stop offset=".6" stopColor="#1c5c94" /><stop offset="1" stopColor="#0c3058" /></radialGradient>
                    </defs>
                    <circle cx="18" cy="18" r="17" fill="url(#orb)" stroke="#8cb0cc" />
                    <path d="M4 12q14-14 28 0-14-6-28 0z" fill="#c8dcec" opacity=".6" />
                    <path d="M11 10q4-3 7-1l-2 8q-3-2-7 0z" fill="#f0602c" />
                    <path d="M19 10q4 2 8 0l-2 8q-4 2-8-1z" fill="#8ccc3c" />
                    <path d="M9 19q4-3 7-1l-2 8q-3-2-7 0z" fill="#4cb4f0" />
                    <path d="M17 19q4 2 8 0l-2 8q-4 2-8-1z" fill="#fcd03c" />
                </svg>
            </button>
            <div className="flex gap-1 pl-1">
                {tasks.map((task) => (
                    <div key={task.label} className="flex gap-px">
                        <button
                            aria-label={task.label}
                            className={`flex h-[38px] items-center justify-center rounded-[3px] border ${task.width} ${
                                task.active
                                    ? "border-[#d8e0e8] bg-linear-to-br from-[#c4ccd8] to-[#6c7890]"
                                    : "border-[#8496ac] bg-linear-to-br from-[#74869c] via-[#34506f] via-40% to-[#1c4478]"
                            }`}
                        >
                            <svg className="size-8" viewBox="0 0 32 32">{task.art}</svg>
                        </button>
                        {task.stacked && <span className="h-[38px] w-[3px] rounded-r-[3px] border-y border-r border-[#8496ac] bg-[#3c5878]" />}
                    </div>
                ))}
            </div>
            <div className="ml-auto flex items-center">
                <svg className="h-7 w-[159px]" viewBox="0 0 159 28">
                    <g fill="none" stroke="#d8dce0">
                        <rect x="1" y="9" width="14" height="9" rx="1" fill="#8c9098" />
                        <path d="M3 12h10M3 15h10M4 8q2-4 5-2t5-3" />
                        <path d="M52 2h6v4h-6zM49 5h6v4h-6z" fill="#0e2a4c" stroke="#fff" />
                    </g>
                    <circle cx="30" cy="12" r="7.5" fill="#1c2cb4" stroke="#b8bce8" />
                    <text x="30" y="17" textAnchor="middle" fontSize="13" fontWeight="bold" fontFamily="Liberation Sans" fill="#fff">?</text>
                    <path d="M49 17h6l-3 3zM66 17h8l-4-4z" fill="#fff" />
                    <path d="M88 9v13M89 9h5l4 2v6h-5l-4-1z" fill="#fff" stroke="#fff" />
                    <circle cx="97.5" cy="18" r="4.5" fill="#d83028" />
                    <path d="M95.5 16l4 4M99.5 16l-4 4" stroke="#fff" strokeWidth="1.3" />
                    <path d="M111 12h3l5-4v14l-5-4h-3z" fill="#fff" />
                    <path d="M121 12q2 3 0 6M123 10q3 5 0 10" fill="none" stroke="#c8d4e0" />
                    <path d="M140 11h8v8h-11v-5M141 22h6M136 9v4h4V9M138 13v6" fill="none" stroke="#fff" strokeWidth="1.5" />
                </svg>
                <div className="w-[76px] text-center leading-[18px]">
                    <p>23:31</p>
                    <p>2022/12/29</p>
                </div>
            </div>
            <button aria-label="Show desktop" className="w-[14px] border border-[#6c8098] bg-linear-to-b from-[#4c6078] to-[#1c3450]" />
        </footer>
    )
}

export default function App() {
    return (
        <div className="flex min-h-screen flex-col overflow-hidden bg-black text-black">
            <TitleBar />
            <main className="relative flex flex-1 flex-col border-l-[7px] border-[#a8c4ec]">
                <div className="flex flex-1 flex-col border-l border-black">
                    <MenuBar />
                    <div className="relative flex flex-1">
                        <Sidebar />
                        <div className="min-w-0 flex-1 overflow-hidden">
                            <Board />
                        </div>
                        <Palette />
                        <Popviews />
                    </div>
                    <CommandBar />
                    <StatusLine />
                </div>
            </main>
            <Taskbar />
        </div>
    )
}
